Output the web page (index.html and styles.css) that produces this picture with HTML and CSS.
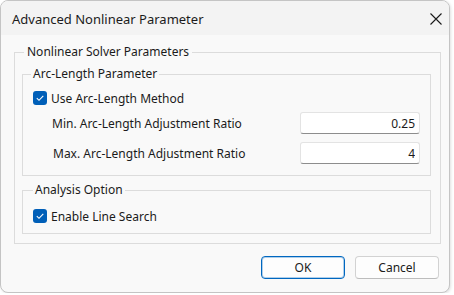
FILE: index.html
```html
<!DOCTYPE html>
<html lang="en">
<head>
    <meta charset="UTF-8">
    <meta name="viewport" content="width=device-width, initial-scale=1.0">
    <title>Advanced Nonlinear Parameter</title>
    <link rel="stylesheet" href="styles.css">
</head>
<body>
    <!-- Dialog Window -->
    <div class="dialog">
        <div class="titlebar">
            <span class="title">Advanced Nonlinear Parameter</span>
            <button class="close" aria-label="Close">
                <svg width="12" height="12" viewBox="0 0 12 12">
                    <path d="M0.5 0.5 L11.5 11.5 M11.5 0.5 L0.5 11.5" stroke="#1a1a1a" stroke-width="1.1" fill="none"/>
                </svg>
            </button>
        </div>

        <div class="content">
            <fieldset class="group outer">
                <legend>Nonlinear Solver Parameters</legend>

                <!-- Arc-Length -->
                <fieldset class="group inner arc">
                    <legend>Arc-Length Parameter</legend>
                    <label class="check first">
                        <span class="box">
                            <svg width="10" height="10" viewBox="0 0 10 10">
                                <path d="M1.8 5.2 L4 7.3 L8.3 2.8" stroke="#fff" stroke-width="1.1" fill="none"/>
                            </svg>
                        </span>
                        Use Arc-Length Method
                    </label>
                    <div class="field-row min">
                        <span class="field-label">Min. Arc-Length Adjustment Ratio</span>
                        <input class="num" type="text" value="0.25">
                    </div>
                    <div class="field-row max">
                        <span class="field-label">Max. Arc-Length Adjustment Ratio</span>
                        <input class="num" type="text" value="4">
                    </div>
                </fieldset>

                <!-- Analysis -->
                <fieldset class="group inner analysis">
                    <legend>Analysis Option</legend>
                    <label class="check">
                        <span class="box">
                            <svg width="10" height="10" viewBox="0 0 10 10">
                                <path d="M1.8 5.2 L4 7.3 L8.3 2.8" stroke="#fff" stroke-width="1.1" fill="none"/>
                            </svg>
                        </span>
                        Enable Line Search
                    </label>
                </fieldset>
            </fieldset>

            <div class="buttons">
                <button class="btn default">OK</button>
                <button class="btn">Cancel</button>
            </div>
        </div>
    </div>
</body>
</html>
```

FILE: styles.css
```css
/* General */
body {
    margin: 0;
    padding: 0;
    background: #ffffff;
    font-family: 'Noto Sans', 'Open Sans', sans-serif;
    font-size: 12px;
    color: #1b1b1b;
}

/* Window */
.dialog {
    width: 450px;
    height: 293px;
    box-sizing: border-box;
    border: 1px solid #c4c4c4;
    border-radius: 8px;
    overflow: hidden;
    background: #f9f9f9;
    box-shadow: 1px 1px 3px rgba(0, 0, 0, 0.12);
}

.titlebar {
    height: 34px;
    display: flex;
    align-items: center;
    background: #f3f3f3;
    padding: 2px 7px 0 11px;
    box-sizing: border-box;
}

.title {
    flex: 1;
    font-size: 13px;
}

.close {
    border: none;
    background: none;
    padding: 0;
    width: 12px;
    height: 12px;
    display: flex;
}

/* Group Boxes */
.group {
    margin: 0;
    border: 1px solid #dcdcdc;
    min-width: 0;
    box-sizing: border-box;
}

.group legend {
    line-height: 16px;
    padding: 0 2px;
}

.outer {
    margin: 9px 0 0 13px;
    width: 427px;
    padding: 6px 9px 9px 7px;
}

.outer > legend {
    margin-left: 2px;
    padding: 0 3px;
}

.inner {
    padding: 0 10px 0 10px;
}

.arc {
    padding-bottom: 11px;
}

.arc > legend {
    margin-left: -2px;
}

.analysis {
    margin-top: 6px;
    padding-bottom: 7px;
}

/* Checkboxes */
.check {
    display: flex;
    align-items: center;
    gap: 4px;
    height: 20px;
    margin-top: 8px;
}

.check.first {
    margin-top: 6px;
}

.box {
    width: 14px;
    height: 14px;
    border-radius: 3px;
    background: #005fb8;
    display: flex;
    align-items: center;
    justify-content: center;
}

/* Numeric Rows */
.field-row {
    display: flex;
    align-items: center;
    height: 22px;
}

.field-row.min {
    margin-top: 4px;
}

.field-row.max {
    margin-top: 8px;
}

.field-label {
    margin-left: 19px;
}

.field-row.max .field-label {
    margin-left: 20px;
}

.num {
    margin-left: auto;
    width: 120px;
    height: 22px;
    box-sizing: border-box;
    border: 1px solid #e3e3e3;
    border-bottom-color: #8d8d8d;
    border-radius: 3px;
    background: #ffffff;
    font-family: inherit;
    font-size: 12px;
    color: #1b1b1b;
    text-align: right;
    padding: 0 4px 0 4px;
    outline: none;
}

/* Buttons */
.buttons {
    display: flex;
    justify-content: flex-end;
    gap: 10px;
    margin-top: 12px;
    padding-right: 10px;
}

.btn {
    width: 84px;
    height: 23px;
    box-sizing: border-box;
    border: 1px solid #d2d2d2;
    border-bottom-color: #bdbdbd;
    border-radius: 4px;
    background: #fdfdfd;
    font-family: inherit;
    font-size: 12px;
    color: #1b1b1b;
    padding: 0;
}

.btn.default {
    border-color: #0067c0;
    box-shadow: inset 0 0 0 1px rgba(0, 103, 192, 0.3);
}
```
